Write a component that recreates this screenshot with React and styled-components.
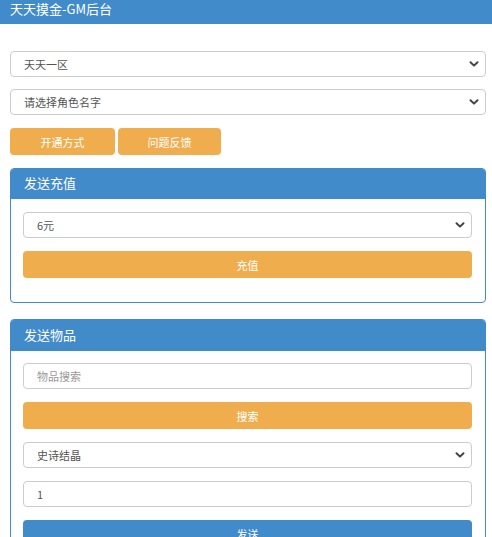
import React from "react";
import styled, { createGlobalStyle } from "styled-components";

const Global = createGlobalStyle`
  html, body { margin: 0; padding: 0; background: #fff; }
  body { font-family: "Noto Sans CJK SC", "Liberation Sans", sans-serif; color: #555; }
  * { box-sizing: border-box; }
`;

const TopBar = styled.header`
  height: 24px;
  background: #428bca;
  color: #fff;
  font-size: 13px;
  line-height: 18px;
  padding-left: 10px;
`;

const Main = styled.main`
  padding: 27px 6px 0 10px;
  display: flex;
  flex-direction: column;
`;

const Stack = styled.div`
  display: flex;
  flex-direction: column;
  gap: 12px;
`;

const SelectWrap = styled.div`
  position: relative;
  height: 26px;
`;

const Select = styled.select`
  appearance: none;
  -webkit-appearance: none;
  display: block;
  width: 100%;
  height: 26px;
  margin: 0;
  border: 1px solid #ccc;
  border-radius: 4px;
  background: #fff;
  padding: 0 24px 0 13px;
  font-family: inherit;
  font-size: 11px;
  color: #555;
  outline: none;
`;

const Chevron = styled.svg`
  position: absolute;
  right: 6px;
  top: 50%;
  transform: translateY(-50%);
  pointer-events: none;
`;

const Input = styled.input`
  display: block;
  width: 100%;
  height: 26px;
  margin: 0;
  border: 1px solid #ccc;
  border-radius: 4px;
  background: #fff;
  padding: 0 13px;
  font-family: inherit;
  font-size: 11px;
  color: #555;
  outline: none;
  &::placeholder { color: #999; }
`;

const Button = styled.button`
  display: block;
  height: 27px;
  width: ${(p) => (p.$w ? `${p.$w}px` : "100%")};
  margin: 0;
  border: none;
  border-radius: 4px;
  background: ${(p) => (p.$variant === "primary" ? "#428bca" : "#f0ad4e")};
  color: #fff;
  font-family: inherit;
  font-size: 11px;
  padding: 0;
  cursor: pointer;
`;

const ButtonRow = styled.div`
  display: flex;
  gap: 3px;
  margin-top: 1px;
`;

const Panel = styled.section`
  border: 1px solid #428bca;
  border-radius: 4px;
  margin-top: ${(p) => p.$mt}px;
  overflow: hidden;
`;

const PanelHead = styled.div`
  height: ${(p) => p.$h}px;
  background: #428bca;
  color: #fff;
  font-size: 13px;
  line-height: ${(p) => p.$h - 2}px;
  padding-left: 13px;
`;

const PanelBody = styled.div`
  padding: ${(p) => p.$pt}px 13px ${(p) => p.$pb}px 12px;
  display: flex;
  flex-direction: column;
  gap: 13px;
`;

function Dropdown({ value, options }) {
  return (
    <SelectWrap>
      <Select defaultValue={value}>
        {options.map((o) => (
          <option key={o}>{o}</option>
        ))}
      </Select>
      <Chevron width="12" height="12" viewBox="0 0 12 12">
        <path d="M2.5 4.2 L6 7.6 L9.5 4.2" fill="none" stroke="#444" strokeWidth="2" strokeLinecap="round" strokeLinejoin="round" />
      </Chevron>
    </SelectWrap>
  );
}

export default function App() {
  return (
    <>
      <Global />
      <TopBar>天天摸金-GM后台</TopBar>
      <Main>
        <Stack>
          <Dropdown value="天天一区" options={["天天一区"]} />
          <Dropdown value="请选择角色名字" options={["请选择角色名字"]} />
          <ButtonRow>
            <Button $w={105}>开通方式</Button>
            <Button $w={103}>问题反馈</Button>
          </ButtonRow>
        </Stack>
        <Panel $mt={13}>
          <PanelHead $h={30}>发送充值</PanelHead>
          <PanelBody $pt={13} $pb={24}>
            <Dropdown value="6元" options={["6元"]} />
            <Button>充值</Button>
          </PanelBody>
        </Panel>
        <Panel $mt={16}>
          <PanelHead $h={31}>发送物品</PanelHead>
          <PanelBody $pt={12} $pb={24}>
            <Input placeholder="物品搜索" />
            <Button>搜索</Button>
            <Dropdown value="史诗结晶" options={["史诗结晶"]} />
            <Input defaultValue="1" />
            <Button $variant="primary">发送</Button>
          </PanelBody>
        </Panel>
      </Main>
    </>
  );
}
